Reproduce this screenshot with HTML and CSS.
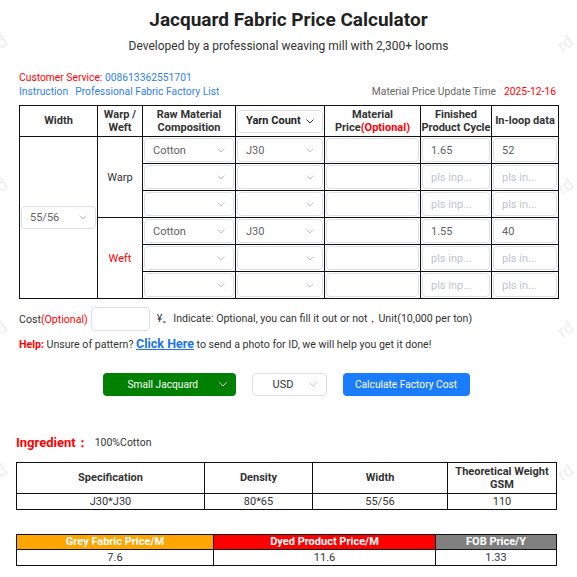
FILE: index.html
```html
<!DOCTYPE html>
<html lang="en">
<head>
<meta charset="utf-8">
<title>Jacquard Fabric Price Calculator</title>
<link rel="stylesheet" href="styles.css">
</head>
<body>
<div class="watermark" aria-hidden="true">
  <span class="wm wl r1">rd</span><span class="wm wr r1">rd</span>
  <span class="wm wl r2">rd</span><span class="wm wr r2">rd</span>
  <span class="wm wl r3">rd</span><span class="wm wr r3">rd</span>
  <span class="wm wl r4">rd</span><span class="wm wr r4">rd</span>
</div>
<div class="page">
  <h1 class="title">Jacquard Fabric Price Calculator</h1>
  <p class="subtitle">Developed by a professional weaving mill with 2,300+ looms</p>

  <div class="info">
    <div class="info-line"><span class="red">Customer Service: </span><span class="link">008613362551701</span></div>
    <div class="info-line split">
      <div><span class="link">Instruction</span><span class="link gap">Professional Fabric Factory List</span></div>
      <div><span class="muted">Material Price Update Time</span><span class="red date">2025-12-16</span></div>
    </div>
  </div>

  <table class="calc">
    <colgroup>
      <col class="c1"><col class="c2"><col class="c3"><col class="c4"><col class="c5"><col class="c6"><col class="c7">
    </colgroup>
    <thead>
      <tr>
        <th>Width</th>
        <th>Warp /<br>Weft</th>
        <th>Raw Material<br>Composition</th>
        <th class="th-sel"><div class="sel sel-head"><span>Yarn Count</span><svg class="chev dark" viewBox="0 0 8 5"><polyline points="0.5,0.5 4,4 7.5,0.5"/></svg></div></th>
        <th>Material<br>Price<span class="red">(Optional)</span></th>
        <th>Finished<br>Product Cycle</th>
        <th>In-loop data</th>
      </tr>
    </thead>
    <tbody>
      <tr>
        <td rowspan="6" class="wcell"><div class="sel sel-width"><span>55/56</span><svg class="chev" viewBox="0 0 8 5"><polyline points="0.5,0.5 4,4 7.5,0.5"/></svg></div></td>
        <td rowspan="3" class="ww">Warp</td>
        <td><div class="sel"><span>Cotton</span><svg class="chev" viewBox="0 0 8 5"><polyline points="0.5,0.5 4,4 7.5,0.5"/></svg></div></td>
        <td><div class="sel"><span>J30</span><svg class="chev" viewBox="0 0 8 5"><polyline points="0.5,0.5 4,4 7.5,0.5"/></svg></div></td>
        <td><div class="inp"></div></td>
        <td><div class="inp">1.65</div></td>
        <td><div class="inp">52</div></td>
      </tr>
      <tr>
        <td><div class="sel"><span></span><svg class="chev" viewBox="0 0 8 5"><polyline points="0.5,0.5 4,4 7.5,0.5"/></svg></div></td>
        <td><div class="sel"><span></span><svg class="chev" viewBox="0 0 8 5"><polyline points="0.5,0.5 4,4 7.5,0.5"/></svg></div></td>
        <td><div class="inp"></div></td>
        <td><div class="inp ph">pls inp...</div></td>
        <td><div class="inp ph">pls in...</div></td>
      </tr>
      <tr>
        <td><div class="sel"><span></span><svg class="chev" viewBox="0 0 8 5"><polyline points="0.5,0.5 4,4 7.5,0.5"/></svg></div></td>
        <td><div class="sel"><span></span><svg class="chev" viewBox="0 0 8 5"><polyline points="0.5,0.5 4,4 7.5,0.5"/></svg></div></td>
        <td><div class="inp"></div></td>
        <td><div class="inp ph">pls inp...</div></td>
        <td><div class="inp ph">pls in...</div></td>
      </tr>
      <tr>
        <td rowspan="3" class="ww red">Weft</td>
        <td><div class="sel"><span>Cotton</span><svg class="chev" viewBox="0 0 8 5"><polyline points="0.5,0.5 4,4 7.5,0.5"/></svg></div></td>
        <td><div class="sel"><span>J30</span><svg class="chev" viewBox="0 0 8 5"><polyline points="0.5,0.5 4,4 7.5,0.5"/></svg></div></td>
        <td><div class="inp"></div></td>
        <td><div class="inp">1.55</div></td>
        <td><div class="inp">40</div></td>
      </tr>
      <tr>
        <td><div class="sel"><span></span><svg class="chev" viewBox="0 0 8 5"><polyline points="0.5,0.5 4,4 7.5,0.5"/></svg></div></td>
        <td><div class="sel"><span></span><svg class="chev" viewBox="0 0 8 5"><polyline points="0.5,0.5 4,4 7.5,0.5"/></svg></div></td>
        <td><div class="inp"></div></td>
        <td><div class="inp ph">pls inp...</div></td>
        <td><div class="inp ph">pls in...</div></td>
      </tr>
      <tr>
        <td><div class="sel"><span></span><svg class="chev" viewBox="0 0 8 5"><polyline points="0.5,0.5 4,4 7.5,0.5"/></svg></div></td>
        <td><div class="sel"><span></span><svg class="chev" viewBox="0 0 8 5"><polyline points="0.5,0.5 4,4 7.5,0.5"/></svg></div></td>
        <td><div class="inp"></div></td>
        <td><div class="inp ph">pls inp...</div></td>
        <td><div class="inp ph">pls in...</div></td>
      </tr>
    </tbody>
  </table>

  <div class="cost">
    <span>Cost<span class="red">(Optional)</span></span>
    <div class="inp cost-inp"></div>
    <span class="cost-note">¥。Indicate: Optional, you can fill it out or not，Unit(10,000 per ton)</span>
  </div>

  <p class="help"><span class="help-label">Help:</span> Unsure of pattern? <a class="click" href="#">Click Here</a> to send a photo for ID, we will help you get it done!</p>

  <div class="actions">
    <div class="btn btn-green"><span>Small Jacquard</span><svg class="chev white" viewBox="0 0 8 5"><polyline points="0.5,0.5 4,4 7.5,0.5"/></svg></div>
    <div class="btn btn-cur"><span>USD</span><svg class="chev" viewBox="0 0 8 5"><polyline points="0.5,0.5 4,4 7.5,0.5"/></svg></div>
    <div class="btn btn-blue">Calculate Factory Cost</div>
  </div>

  <div class="ingredient"><span class="ing-label">Ingredient：</span><span class="ing-val">100%Cotton</span></div>

  <table class="spec">
    <colgroup><col class="s1"><col class="s2"><col class="s3"><col class="s4"></colgroup>
    <thead>
      <tr><th>Specification</th><th>Density</th><th>Width</th><th>Theoretical Weight<br>GSM</th></tr>
    </thead>
    <tbody>
      <tr><td>J30*J30</td><td>80*65</td><td>55/56</td><td>110</td></tr>
    </tbody>
  </table>

  <table class="price">
    <colgroup><col class="p1"><col class="p2"><col class="p3"></colgroup>
    <thead>
      <tr><th class="orange">Grey Fabric Price/M</th><th class="redbg">Dyed Product Price/M</th><th class="gray">FOB Price/Y</th></tr>
    </thead>
    <tbody>
      <tr><td>7.6</td><td>11.6</td><td>1.33</td></tr>
    </tbody>
  </table>
</div>
</body>
</html>
```

FILE: styles.css
```css
* { box-sizing: border-box; }
html, body { margin: 0; padding: 0; background: #fff; }
body {
  font-family: Roboto, "Noto Sans", sans-serif;
  color: #333;
  font-size: 11px;
  position: relative;
  width: 577px;
  min-height: 577px;
  overflow: hidden;
}

.watermark { position: absolute; inset: 0; pointer-events: none; }
.wm {
  position: absolute;
  font-size: 17px;
  color: #eeeeee;
  transform: rotate(-35deg);
  line-height: 1;
}
.wl { left: -8px; }
.wr { left: 558px; }
.r1 { top: 35px; }
.r2 { top: 178px; }
.r3 { top: 321px; }
.r4 { top: 464px; }

.page { position: relative; }

.red { color: #ff0000; }
.link { color: #2f7fef; }
.muted { color: #666; }

.title {
  margin: 0;
  padding-top: 7px;
  font-size: 19px;
  line-height: 26px;
  font-weight: 700;
  color: #222;
  text-align: center;
}
.subtitle {
  margin: 4px 0 0;
  font-size: 12px;
  line-height: 18px;
  text-align: center;
  color: #333;
}

.info { margin-top: 16px; padding: 0 21px 0 19px; }
.info-line { line-height: 14px; font-size: 10.3px; }
.split { display: flex; justify-content: space-between; }
.gap { margin-left: 7px; }
.date { margin-left: 8px; }

/* main calculator table */
.calc {
  margin: 6px 0 0 19px;
  width: 539px;
  table-layout: fixed;
  border-collapse: collapse;
}
.c1 { width: 78px; } .c2 { width: 45px; } .c3 { width: 93px; } .c4 { width: 89px; }
.c5 { width: 96px; } .c6 { width: 71px; } .c7 { width: 67px; }

.calc th, .calc td { border: 1px solid #111; box-sizing: content-box; }
.calc th {
  height: 30px;
  padding: 0;
  font-weight: 700;
  font-size: 11px;
  line-height: 13.5px;
  text-align: center;
  color: #333;
  white-space: nowrap;
}
.calc th.th-sel { padding: 0 1px; }
.calc td { height: 24px; padding: 1px; }
.calc td.ww { text-align: center; font-size: 11px; }

.sel, .inp {
  height: 24px;
  border: 1px solid #dcdfe6;
  border-radius: 4px;
  background: #fff;
  font-size: 11px;
  color: #606266;
  display: flex;
  align-items: center;
}
.sel { justify-content: space-between; padding: 0 8px 0 8px; }
.inp { padding: 0 8px; white-space: nowrap; overflow: hidden; }
.inp.ph { color: #c0c4cc; }
.sel-head { height: 23px; font-weight: 700; color: #222; }
.sel-width { height: 23px; }

.chev { width: 8px; height: 5px; flex: none; }
.chev polyline { fill: none; stroke: #c0c4cc; stroke-width: 1; }
.chev.dark polyline { stroke: #333; }
.chev.white polyline { stroke: #fff; }

/* cost row */
.cost {
  display: flex;
  align-items: center;
  margin-top: 8px;
  padding-left: 19px;
  font-size: 10.6px;
}
.cost-inp { width: 59px; height: 24px; margin-left: 3px; }
.cost-note { margin-left: 7px; }

.help {
  margin: 5px 0 0;
  padding-left: 19px;
  font-size: 10.6px;
  line-height: 16px;
}
.help-label { color: #ff0000; font-weight: 700; }
.click { color: #1a73e8; font-weight: 700; font-size: 12.5px; text-decoration: underline; }

.actions {
  display: flex;
  justify-content: center;
  gap: 16px;
  margin-top: 20px;
  padding-right: 5px;
}
.btn {
  height: 23px;
  border-radius: 4px;
  font-size: 10.2px;
  display: flex;
  align-items: center;
}
.btn-green {
  width: 133px;
  background: #008000;
  color: #fff;
  padding: 0 9px 0 25px;
  justify-content: space-between;
}
.btn-cur {
  width: 75px;
  border: 1px solid #dcdfe6;
  color: #333;
  padding: 0 9px 0 20px;
  justify-content: space-between;
  font-size: 11px;
}
.btn-blue {
  width: 127px;
  background: #1a7cff;
  color: #fff;
  justify-content: center;
}

.ingredient {
  margin-top: 37px;
  padding-left: 16px;
  line-height: 20px;
  display: flex;
  align-items: center;
}
.ing-label { color: #ff0000; font-weight: 700; font-size: 13px; }
.ing-val { font-size: 10.5px; margin-left: 6px; }

.spec, .price {
  margin-left: 16px;
  width: 540px;
  table-layout: fixed;
  border-collapse: collapse;
}
.spec { margin-top: 9px; }
.s1 { width: 188px; } .s2 { width: 108px; } .s3 { width: 135px; } .s4 { width: 109px; }
.spec th, .spec td, .price th, .price td {
  border: 1px solid #111;
  box-sizing: content-box;
  padding: 0;
  text-align: center;
  font-size: 11px;
}
.spec th { height: 30px; font-weight: 700; line-height: 13.5px; }
.spec td { height: 15px; line-height: 14px; }

.price { margin-top: 24px; }
.p1 { width: 197px; } .p2 { width: 222px; } .p3 { width: 121px; }
.price th { height: 14px; line-height: 14px; color: #fff; font-weight: 700; }
.price td { height: 15px; line-height: 15px; }
.orange { background: #ffa500; }
.redbg { background: #ff0000; }
.gray { background: #808080; }
```
